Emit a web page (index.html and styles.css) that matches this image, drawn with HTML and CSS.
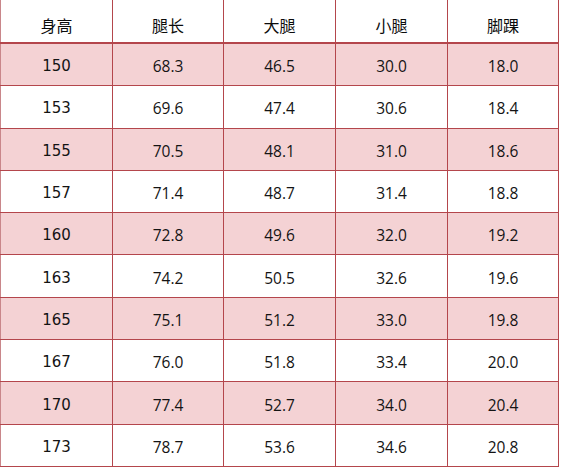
FILE: index.html
```html
<!DOCTYPE html>
<html lang="zh">
<head>
<meta charset="utf-8">
<link rel="stylesheet" href="styles.css">
</head>
<body>
<div class="size-table">
  <div class="row head"><div class="cell">身高</div><div class="cell">腿长</div><div class="cell">大腿</div><div class="cell">小腿</div><div class="cell">脚踝</div></div>
  <div class="row alt"><div class="cell h">150</div><div class="cell">68.3</div><div class="cell">46.5</div><div class="cell">30.0</div><div class="cell">18.0</div></div>
  <div class="row"><div class="cell h">153</div><div class="cell">69.6</div><div class="cell">47.4</div><div class="cell">30.6</div><div class="cell">18.4</div></div>
  <div class="row alt"><div class="cell h">155</div><div class="cell">70.5</div><div class="cell">48.1</div><div class="cell">31.0</div><div class="cell">18.6</div></div>
  <div class="row"><div class="cell h">157</div><div class="cell">71.4</div><div class="cell">48.7</div><div class="cell">31.4</div><div class="cell">18.8</div></div>
  <div class="row alt"><div class="cell h">160</div><div class="cell">72.8</div><div class="cell">49.6</div><div class="cell">32.0</div><div class="cell">19.2</div></div>
  <div class="row"><div class="cell h">163</div><div class="cell">74.2</div><div class="cell">50.5</div><div class="cell">32.6</div><div class="cell">19.6</div></div>
  <div class="row alt"><div class="cell h">165</div><div class="cell">75.1</div><div class="cell">51.2</div><div class="cell">33.0</div><div class="cell">19.8</div></div>
  <div class="row"><div class="cell h">167</div><div class="cell">76.0</div><div class="cell">51.8</div><div class="cell">33.4</div><div class="cell">20.0</div></div>
  <div class="row alt"><div class="cell h">170</div><div class="cell">77.4</div><div class="cell">52.7</div><div class="cell">34.0</div><div class="cell">20.4</div></div>
  <div class="row"><div class="cell h">173</div><div class="cell">78.7</div><div class="cell">53.6</div><div class="cell">34.6</div><div class="cell">20.8</div></div>
</div>
</body>
</html>
```

FILE: styles.css
```css
html, body {
  margin: 0;
  padding: 0;
  background: #ffffff;
}

.size-table {
  display: grid;
  grid-template-rows: 44px repeat(10, 42.3px);
  width: 559px;
  color: #141414;
  font-family: "Open Sans", "Noto Sans CJK SC", sans-serif;
  font-size: 15.5px;
}

.row {
  display: grid;
  grid-template-columns: 113px 111px 112px 112px 111px;
  box-sizing: border-box;
  border-bottom: 1px solid #b4464c;
}

.row.head {
  border-bottom: 2px solid #b4464c;
}

.row.alt {
  background: #f4d2d4;
}

.cell {
  display: flex;
  align-items: center;
  justify-content: center;
  border-right: 1px solid #b4464c;
  line-height: 20px;
  padding-top: 3px;
}

.cell:first-child {
  border-left: 1px solid #c9868a;
}

.head .cell {
  padding-top: 7px;
  font-family: "Noto Sans CJK SC", sans-serif;
  font-weight: 400;
  font-size: 16px;
  color: #0c0c0c;
}

.cell.h {
  font-family: "DejaVu Sans", sans-serif;
  font-size: 15px;
}
```
